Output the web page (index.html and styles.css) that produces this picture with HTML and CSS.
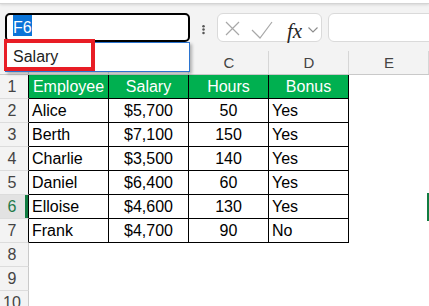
FILE: index.html
```html
<!DOCTYPE html>
<html lang="en">
<head>
<meta charset="utf-8">
<title>Sheet</title>
<link rel="stylesheet" href="styles.css">
</head>
<body>
<div class="ribbon"></div>
<div class="fbar">
  <div class="namebox"><span class="seltext">F6</span></div>
  <svg class="dots" width="5" height="10" viewBox="0 0 5 10"><circle cx="2.5" cy="1.3" r="1.25"/><circle cx="2.5" cy="4.6" r="1.25"/><circle cx="2.5" cy="7.9" r="1.25"/></svg>
  <div class="fbtns">
    <svg class="ic-x" width="15" height="15" viewBox="0 0 15 15"><path d="M1 1L14 14M14 1L1 14"/></svg>
    <svg class="ic-ok" width="24" height="19" viewBox="0 0 24 19"><path d="M2 9L10 17L22 1"/></svg>
    <span class="fx">fx</span>
    <svg class="ic-chev" width="10" height="6" viewBox="0 0 10 6"><path d="M0.5 0.5L5 5L9.5 0.5"/></svg>
  </div>
  <div class="finput"></div>
</div>
<div class="sheet">
  <div class="row colhead">
    <div class="rh corner"></div>
    <div class="ch">A</div><div class="ch">B</div><div class="ch">C</div><div class="ch">D</div><div class="ch">E</div><div class="ch"></div>
  </div>
  <div class="row">
    <div class="rh tb">1</div>
    <div class="c t hd">Employee</div><div class="c t hd">Salary</div><div class="c t hd">Hours</div><div class="c t hd">Bonus</div><div class="c"></div><div class="c"></div>
  </div>
  <div class="row">
    <div class="rh tb">2</div>
    <div class="c t">Alice</div><div class="c t mid">$5,700</div><div class="c t mid">50</div><div class="c t">Yes</div><div class="c"></div><div class="c"></div>
  </div>
  <div class="row">
    <div class="rh tb">3</div>
    <div class="c t">Berth</div><div class="c t mid">$7,100</div><div class="c t mid">150</div><div class="c t">Yes</div><div class="c"></div><div class="c"></div>
  </div>
  <div class="row">
    <div class="rh tb">4</div>
    <div class="c t">Charlie</div><div class="c t mid">$3,500</div><div class="c t mid">140</div><div class="c t">Yes</div><div class="c"></div><div class="c"></div>
  </div>
  <div class="row">
    <div class="rh tb">5</div>
    <div class="c t">Daniel</div><div class="c t mid">$6,400</div><div class="c t mid">60</div><div class="c t">Yes</div><div class="c"></div><div class="c"></div>
  </div>
  <div class="row">
    <div class="rh tb active">6</div>
    <div class="c t">Elloise</div><div class="c t mid">$4,600</div><div class="c t mid">130</div><div class="c t">Yes</div><div class="c"></div><div class="c selcell"></div>
  </div>
  <div class="row">
    <div class="rh tb">7</div>
    <div class="c t">Frank</div><div class="c t mid">$4,700</div><div class="c t mid">90</div><div class="c t">No</div><div class="c"></div><div class="c"></div>
  </div>
  <div class="row">
    <div class="rh">8</div>
    <div class="c"></div><div class="c"></div><div class="c"></div><div class="c"></div><div class="c"></div><div class="c"></div>
  </div>
  <div class="row">
    <div class="rh">9</div>
    <div class="c"></div><div class="c"></div><div class="c"></div><div class="c"></div><div class="c"></div><div class="c"></div>
  </div>
  <div class="row">
    <div class="rh">10</div>
    <div class="c"></div><div class="c"></div><div class="c"></div><div class="c"></div><div class="c"></div><div class="c"></div>
  </div>
</div>
<div class="dropdown">Salary</div>
<div class="annot"></div>
</body>
</html>
```
FILE: styles.css
```css
html, body {
  margin: 0;
  padding: 0;
  overflow: hidden;
  background: #ffffff;
}
body {
  position: relative;
  width: 429px;
  height: 306px;
  font-family: "Liberation Sans", Arial, sans-serif;
  font-size: 16px;
  color: #000;
}

.ribbon {
  height: 3px;
  background: #ffffff;
  border-bottom: 1px solid #d4d4d4;
  box-shadow: 0 1px 3px rgba(0, 0, 0, 0.12);
  position: relative;
  z-index: 1;
}

.fbar {
  height: 40px;
  box-sizing: border-box;
  padding: 9px 0 0 5px;
  background: #f3f3f3;
  display: flex;
  align-items: flex-start;
  overflow: hidden;
}

.namebox {
  flex: none;
  width: 185px;
  height: 29px;
  box-sizing: border-box;
  border: 2px solid #000;
  border-radius: 5px;
  background: #fff;
  padding-left: 6px;
  display: flex;
  align-items: flex-start;
}
.seltext {
  display: block;
  height: 21px;
  box-sizing: border-box;
  padding-top: 4px;
  line-height: 17px;
  background: #0a74d8;
  color: #fff;
  font-size: 16px;
}

.dots {
  flex: none;
  margin: 12px 0 0 11px;
  fill: #555;
}

.fbtns {
  flex: none;
  margin-left: 11px;
  width: 105px;
  height: 29px;
  box-sizing: border-box;
  border: 1px solid #dadada;
  border-radius: 6px;
  background: #fff;
  display: flex;
  align-items: flex-start;
  padding: 7px 0 0 7px;
}
.fbtns svg {
  flex: none;
  fill: none;
}
.ic-x {
  stroke: #a8a8a8;
  stroke-width: 1.2;
}
.ic-ok {
  margin-left: 10px;
  stroke: #a8a8a8;
  stroke-width: 1.2;
}
.fx {
  flex: none;
  margin-left: 13px;
  font-family: "Liberation Serif", "Times New Roman", serif;
  font-style: italic;
  font-size: 21px;
  line-height: 20px;
  color: #262626;
}
.ic-chev {
  margin: 6px 0 0 6px;
  stroke: #8c8c8c;
  stroke-width: 1.1;
}

.finput {
  flex: none;
  margin-left: 6px;
  width: 160px;
  height: 29px;
  box-sizing: border-box;
  border: 1px solid #dadada;
  border-radius: 6px;
  background: #fff;
}

.sheet {
  width: 509px;
}
.row {
  display: flex;
  height: 24px;
}
.row > div {
  flex: none;
  box-sizing: border-box;
  height: 24px;
  line-height: 23px;
  white-space: nowrap;
  overflow: hidden;
}

.colhead {
  height: 31px;
  background: #f3f3f3;
}
.colhead > div {
  height: 31px;
  border-bottom: 1px solid #c9c9c9;
}
.ch {
  width: 80px;
  text-align: center;
  font-size: 15px;
  color: #444;
  padding-top: 8px;
  line-height: 22px !important;
  background-image: linear-gradient(#d6d6d6, #d6d6d6);
  background-size: 1px 23px;
  background-position: right bottom;
  background-repeat: no-repeat;
}

.rh {
  width: 29px;
  background: #f3f3f3;
  border-right: 1px solid #c9c9c9;
  border-bottom: 1px solid #dcdcdc;
  text-align: center;
  padding-right: 4px;
  color: #444;
}
.rh.tb {
  border-right-color: #000;
}
.rh.active {
  background: #e2e2e2;
  color: #1f7a4a;
  box-shadow: inset -3px 0 0 #107c41;
}
.corner {
  background: #f3f3f3;
}

.c {
  width: 80px;
  border-right: 1px solid transparent;
  border-bottom: 1px solid transparent;
  padding-left: 3px;
}
.c.t {
  border-right-color: #000;
  border-bottom-color: #000;
}
.c.mid {
  text-align: center;
  padding-left: 0;
}
.c.hd {
  background: #00b050;
  color: #fff;
  text-align: center;
  padding-left: 0;
}
.selcell {
  outline: 2px solid #107c41;
}

.dropdown {
  position: absolute;
  left: 5px;
  top: 42px;
  width: 185px;
  height: 30px;
  box-sizing: border-box;
  border: 1px solid #2b74d0;
  background: #fff;
  box-shadow: 2px 2px 3px rgba(0, 0, 0, 0.28);
  padding-left: 7px;
  line-height: 28px;
  font-size: 16px;
  color: #222;
  z-index: 2;
}
.annot {
  position: absolute;
  left: 4px;
  top: 39px;
  width: 91px;
  height: 32px;
  box-sizing: border-box;
  border: 4px solid #e81d25;
  border-left-width: 3px;
  z-index: 3;
}
```
